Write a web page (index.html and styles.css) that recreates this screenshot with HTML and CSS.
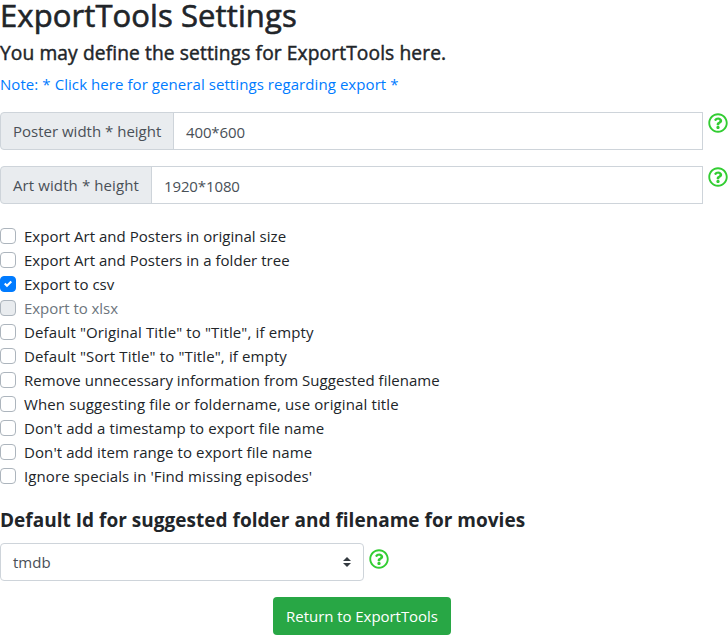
FILE: index.html
```html
<!DOCTYPE html>
<html lang="en">
<head>
<meta charset="utf-8">
<title>ExportTools Settings</title>
<link rel="stylesheet" href="styles.css">
</head>
<body>
<svg class="defs" width="0" height="0" aria-hidden="true">
  <symbol id="help" viewBox="0 0 512 512">
    <path d="M256 8C119.043 8 8 119.083 8 256c0 136.997 111.043 248 248 248s248-111.003 248-248C504 119.083 392.957 8 256 8zm0 448c-110.532 0-200-89.431-200-200 0-110.495 89.472-200 200-200 110.491 0 200 89.471 200 200 0 110.53-89.431 200-200 200zm107.244-255.2c0 67.052-72.421 68.084-72.421 92.863V300c0 6.627-5.373 12-12 12h-45.647c-6.627 0-12-5.373-12-12v-8.659c0-35.745 27.1-50.034 47.579-61.516 17.561-9.845 28.324-16.541 28.324-29.579 0-17.246-21.999-28.693-39.784-28.693-23.189 0-33.894 10.977-48.942 29.969-4.057 5.12-11.46 6.071-16.666 2.124l-27.824-21.098c-5.107-3.872-6.251-11.066-2.644-16.363C184.846 131.491 214.94 112 261.794 112c49.071 0 101.45 38.304 101.45 88.8zM298 368c0 23.159-18.841 42-42 42s-42-18.841-42-42 18.841-42 42-42 42 18.841 42 42z"/>
  </symbol>
</svg>
<main class="page">
  <h1 class="title">ExportTools Settings</h1>
  <h2 class="subtitle">You may define the settings for ExportTools here.</h2>
  <a class="note">Note: * Click here for general settings regarding export *</a>

  <div class="field">
    <div class="group"><label class="prepend poster">Poster width * height</label><div class="value">400*600</div></div>
    <svg class="help"><use href="#help"/></svg>
  </div>
  <div class="field">
    <div class="group"><label class="prepend art">Art width * height</label><div class="value">1920*1080</div></div>
    <svg class="help"><use href="#help"/></svg>
  </div>

  <ul class="checks">
    <li><i class="box"></i><span>Export Art and Posters in original size</span></li>
    <li><i class="box"></i><span>Export Art and Posters in a folder tree</span></li>
    <li><i class="box checked"><svg viewBox="0 0 8 8"><path d="M6.564.75l-3.59 3.612-1.538-1.55L0 4.26l2.974 2.99L8 2.193z"/></svg></i><span>Export to csv</span></li>
    <li class="disabled"><i class="box"></i><span>Export to xlsx</span></li>
    <li class="wider"><i class="box"></i><span>Default "Original Title" to "Title", if empty</span></li>
    <li class="wider"><i class="box"></i><span>Default "Sort Title" to "Title", if empty</span></li>
    <li><i class="box"></i><span>Remove unnecessary information from Suggested filename</span></li>
    <li class="wider"><i class="box"></i><span>When suggesting file or foldername, use original title</span></li>
    <li class="wide"><i class="box"></i><span>Don't add a timestamp to export file name</span></li>
    <li class="wide"><i class="box"></i><span>Don't add item range to export file name</span></li>
    <li class="wide"><i class="box"></i><span>Ignore specials in 'Find missing episodes'</span></li>
  </ul>

  <h2 class="section">Default Id for suggested folder and filename for movies</h2>
  <div class="picker">
    <div class="select"><span>tmdb</span><svg class="caret" viewBox="0 0 4 5"><path d="M2 0L0 2h4zm0 5L0 3h4z"/></svg></div>
    <svg class="help"><use href="#help"/></svg>
  </div>
  <button class="return" type="button">Return to ExportTools</button>
</main>
</body>
</html>
```
FILE: styles.css
```css
* { box-sizing: border-box; }
body {
  margin: 0;
  background: #fff;
  color: #212529;
  font: 400 15px/24px "Open Sans", "Noto Sans", sans-serif;
}
.defs { display: block; }
.page { display: flex; flex-direction: column; width: 728px; height: 635px; white-space: nowrap; }
h1, h2 { margin: 0; font-weight: 400; }
.title { height: 41px; font-size: 31px; line-height: 30px; letter-spacing: .1px; -webkit-text-stroke: .6px currentColor; }
.subtitle { height: 31px; font-size: 19.2px; line-height: 24px; letter-spacing: .11px; -webkit-text-stroke: .45px currentColor; }
.note { height: 40px; color: #007bff; letter-spacing: .07px; }
.field { display: flex; justify-content: space-between; height: 38px; margin-bottom: 16px; }
.group { display: flex; width: 703px; }
.prepend { padding: 6px 12px; border: 1px solid #ced4da; border-radius: 4px 0 0 4px; background: #e9ecef; color: #495057; }
.prepend.poster { width: 174px; }
.prepend.art { width: 152px; letter-spacing: .1px; }
.value { flex: 1; margin-left: -1px; padding: 7px 12px 5px; border: 1px solid #ced4da; color: #495057; letter-spacing: -.12px; }
.help { width: 20px; height: 20px; margin-top: 1px; fill: #32cd32; }
.checks { list-style: none; margin: 4px 0 0; padding: 0; }
.checks li { display: flex; gap: 8px; height: 24px; letter-spacing: .035px; }
.checks li.wide { letter-spacing: .09px; }
.checks li.wider { letter-spacing: .13px; }
.checks li.disabled { letter-spacing: -.05px; }
.checks li > span { line-height: 25px; }
.box { display: flex; width: 16px; height: 16px; margin-top: 4px; border: 1px solid #adb5bd; border-radius: 4px; }
.checked { align-items: center; justify-content: center; border-color: #007bff; background: #007bff; }
.checked svg { width: 8px; height: 8px; fill: #fff; }
.disabled { color: #6c757d; }
.disabled .box { background: #e9ecef; }
.section { height: 35px; margin-top: 20px; font-size: 19px; line-height: 24px; font-weight: 700; letter-spacing: .02px; }
.picker { display: flex; gap: 5px; height: 38px; }
.picker .help { margin-top: 6px; }
.select { display: flex; align-items: center; justify-content: space-between; width: 364px; padding: 0 12px; border: 1px solid #ced4da; border-radius: 4px; color: #495057; }
.caret { width: 8px; height: 10px; fill: #343a40; }
.return { align-self: flex-start; width: 178px; height: 38px; margin: 16px 0 0 273px; padding: 0; border: 0; border-radius: 4px; background: #28a745; color: #fff; font: inherit; letter-spacing: -.05px; }
```
